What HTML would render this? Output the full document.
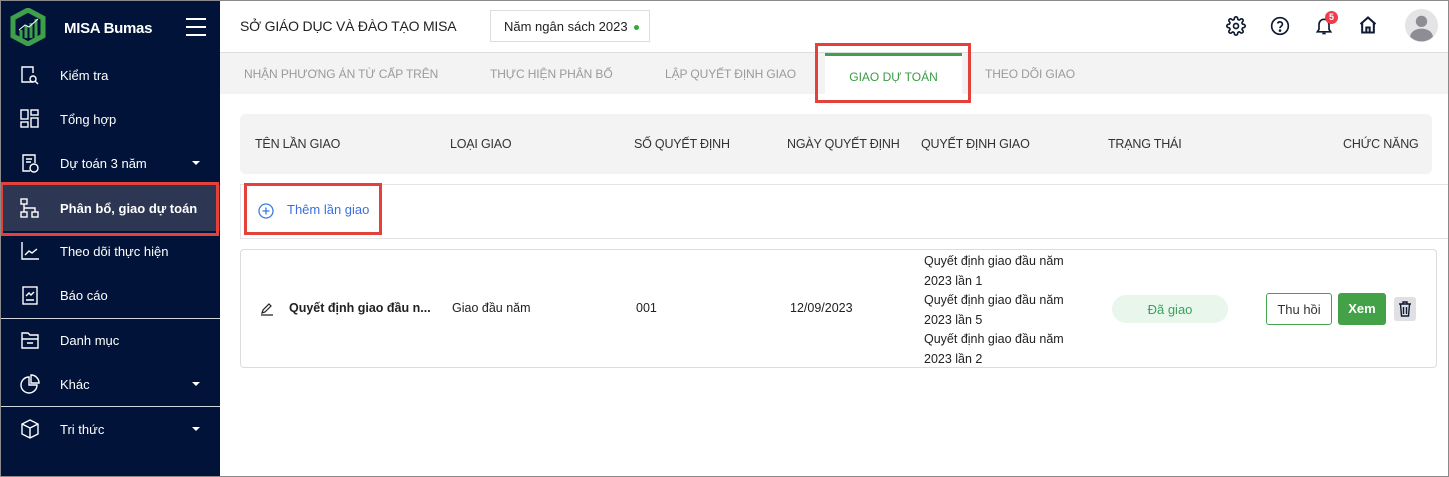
<!DOCTYPE html>
<html><head><meta charset="utf-8"><style>
*{box-sizing:border-box;margin:0;padding:0}
body{width:1449px;height:477px;overflow:hidden;font-family:"Liberation Sans",sans-serif;background:#fff;position:relative;color:#212121}
.frame{position:absolute;inset:0;border:1px solid #8a8a8a;pointer-events:none;z-index:10}
.sb{position:absolute;left:0;top:0;width:220px;height:477px;background:#011338;color:#fff}
.sb .logo{position:absolute;left:10px;top:8px}
.sb .brand{position:absolute;left:64px;top:20px;font-size:15px;font-weight:bold;letter-spacing:-0.3px}
.ham{position:absolute;left:186px;top:18px;width:20px}
.ham i{display:block;height:2px;background:#fff;margin-bottom:6px}
.it{position:absolute;left:0;width:220px;height:44px;font-size:13px;display:flex;align-items:center}
.it span{position:absolute;left:60px}
.it svg{position:absolute;left:20px}
.it .car{position:absolute;left:192px;width:0;height:0;border-left:4px solid transparent;border-right:4px solid transparent;border-top:4px solid #fff}
.act{background:#2d3652;font-weight:bold;border-left:3px solid #3ea04a}
.sep{position:absolute;left:0;width:220px;height:1px;background:#d0d4dc}
.red{position:absolute;border:3px solid #e5413b}
.hdr{position:absolute;left:220px;top:0;right:0;height:53px;border-bottom:1px solid #ddd}
.title{position:absolute;left:20px;top:18px;font-size:14px;color:#222;letter-spacing:-0.2px}
.year{position:absolute;left:270px;top:10px;width:160px;height:32px;border:1px solid #ddd;font-size:13px;padding:8px 0 0 13px}
.year b{position:absolute;right:10px;top:14px;width:5px;height:5px;border-radius:50%;background:#2eab3a}
.tabs{position:absolute;left:220px;top:53px;right:1px;height:41px;background:#f3f3f3}
.tab{position:absolute;top:14px;font-size:12px;color:#9a9a9a;letter-spacing:-0.1px}
.atab{position:absolute;left:605px;top:0;width:137px;height:41px;background:#fff;border-top:3px solid #3ea04a;color:#3a9a46;font-size:12px;text-align:center;padding-top:14px}
.th{position:absolute;left:240px;top:114px;width:1192px;height:60px;background:#f3f3f3;border-radius:6px;font-size:12.5px;color:#333;letter-spacing:-0.2px}
.th span{position:absolute;top:23px}
.line{position:absolute;left:220px;right:1px;height:1px;background:#e2e3e7}
.add{position:absolute;left:258px;top:202px;font-size:13px;color:#3b6fe0}
.card{position:absolute;left:240px;top:249px;width:1197px;height:119px;border:1px solid #dcdcdc;border-radius:4px;font-size:12.5px}
.card .c{position:absolute;top:51px}
.dec{position:absolute;left:683px;top:2px;line-height:19.5px;font-size:12.5px}
.pill{position:absolute;left:871px;top:45px;width:116px;height:28px;border-radius:14px;background:#e8f6ec;color:#3aa35a;text-align:center;padding-top:7px;font-size:13px}
.thu{position:absolute;left:1025px;top:43px;width:66px;height:32px;border:1px solid #45a24e;border-radius:3px;text-align:center;padding-top:8px;font-size:13px;color:#333}
.xem{position:absolute;left:1097px;top:43px;width:48px;height:32px;background:#43a147;border-radius:3px;color:#fff;font-weight:bold;text-align:center;padding-top:8px;font-size:13px}
.del{position:absolute;left:1153px;top:47px;width:22px;height:24px;background:#e0e0e4;border-radius:3px}
</style></head><body>
<div class="sb">
 <svg class="logo" width="36" height="38" viewBox="0 0 36 38"><path d="M18 2 L33 10 L33 28 L18 36 L3 28 L3 10 Z" fill="none" stroke="#3ea04a" stroke-width="5"/><path d="M11 30V22M16 30V18M21 30V15M26 30V11" stroke="#3ea04a" stroke-width="3"/><path d="M9 22 L15 17 L19 19 L28 11" stroke="#fff" stroke-width="1" fill="none"/></svg>
 <div class="brand">MISA Bumas</div>
 <div class="ham"><i></i><i></i><i></i></div>
 <div class="it" style="top:53px"><svg width="20" height="20" viewBox="0 0 20 20" fill="none" stroke="#fff" stroke-width="1.4"><path d="M13 17H2V2h11v6"/><circle cx="13" cy="14" r="3"/><path d="M15 16l3 3"/></svg><span>Kiểm tra</span></div>
 <div class="it" style="top:97px"><svg width="20" height="20" viewBox="0 0 20 20" fill="none" stroke="#fff" stroke-width="1.4"><rect x="1" y="1" width="7" height="9"/><rect x="1" y="13" width="7" height="5"/><rect x="11" y="1" width="7" height="5"/><rect x="11" y="9" width="7" height="9"/></svg><span>Tổng hợp</span></div>
 <div class="it" style="top:141px"><svg width="20" height="20" viewBox="0 0 20 20" fill="none" stroke="#fff" stroke-width="1.4"><path d="M10 18H3V2h12v8"/><path d="M6 6h6M6 9h5"/><circle cx="14" cy="15" r="4"/></svg><span>Dự toán 3 năm</span><i class="car"></i></div>
 <div class="it act" style="top:185px;height:46px"><svg width="20" height="20" viewBox="0 0 20 20" fill="none" stroke="#fff" stroke-width="1.4" style="left:17px"><rect x="1" y="1" width="6" height="5"/><rect x="1" y="14" width="6" height="5"/><rect x="12" y="14" width="6" height="5"/><path d="M4 6v8M4 10h11v4"/></svg><span style="left:57px">Phân bổ, giao dự toán</span></div>
 <div class="it" style="top:229px"><svg width="20" height="20" viewBox="0 0 20 20" fill="none" stroke="#fff" stroke-width="1.4"><path d="M2 1v17h17"/><path d="M5 14l4-4 3 2 5-4"/></svg><span>Theo dõi thực hiện</span></div>
 <div class="it" style="top:273px"><svg width="20" height="20" viewBox="0 0 20 20" fill="none" stroke="#fff" stroke-width="1.4"><rect x="3" y="2" width="14" height="17"/><path d="M6 11l3-3 2 2 3-3M6 15h8"/></svg><span>Báo cáo</span></div>
 <div class="sep" style="top:318px"></div>
 <div class="it" style="top:318px"><svg width="20" height="20" viewBox="0 0 20 20" fill="none" stroke="#fff" stroke-width="1.4"><path d="M2 3h6l2 2h8v13H2z"/><path d="M2 9h16M7 13h6"/></svg><span>Danh mục</span></div>
 <div class="it" style="top:362px"><svg width="20" height="20" viewBox="0 0 20 20" fill="none" stroke="#fff" stroke-width="1.4"><path d="M9 3a8 8 0 1 0 8 8H9z"/><path d="M11 1a8 8 0 0 1 8 8h-8z"/></svg><span>Khác</span><i class="car"></i></div>
 <div class="sep" style="top:406px"></div>
 <div class="it" style="top:407px"><svg width="20" height="20" viewBox="0 0 20 20" fill="none" stroke="#fff" stroke-width="1.4"><path d="M10 1l8 4v10l-8 4-8-4V5z"/><path d="M2 5l8 4 8-4M10 9v10"/></svg><span>Tri thức</span><i class="car"></i></div>
</div>
<div class="red" style="left:0;top:182px;width:219px;height:54px"></div>

<div class="hdr">
 <div class="title">SỞ GIÁO DỤC VÀ ĐÀO TẠO MISA</div>
 <div class="year">Năm ngân sách 2023<b></b></div>
 <svg style="position:absolute;left:1006px;top:16px" width="20" height="20" viewBox="0 0 24 24" fill="none" stroke="#0f1a33" stroke-width="2"><circle cx="12" cy="12" r="3"/><path d="M19.4 15a1.7 1.7 0 0 0 .3 1.8l.1.1a2 2 0 1 1-2.8 2.8l-.1-.1a1.7 1.7 0 0 0-2.9 1.2V21a2 2 0 1 1-4 0v-.1a1.7 1.7 0 0 0-2.9-1.2l-.1.1a2 2 0 1 1-2.8-2.8l.1-.1A1.7 1.7 0 0 0 3 14H3a2 2 0 1 1 0-4h.1a1.7 1.7 0 0 0 1.2-2.9l-.1-.1a2 2 0 1 1 2.8-2.8l.1.1A1.7 1.7 0 0 0 10 3V3a2 2 0 1 1 4 0v.1a1.7 1.7 0 0 0 2.9 1.2l.1-.1a2 2 0 1 1 2.8 2.8l-.1.1A1.7 1.7 0 0 0 21 10h0a2 2 0 1 1 0 4h-.1a1.7 1.7 0 0 0-1.5 1z"/></svg>
 <svg style="position:absolute;left:1050px;top:16px" width="20" height="20" viewBox="0 0 24 24" fill="none" stroke="#0f1a33" stroke-width="2"><circle cx="12" cy="12" r="10"/><path d="M9.1 9a3 3 0 0 1 5.8 1c0 2-3 2.5-3 4.5"/><circle cx="12" cy="17.5" r=".6" fill="#0f1a33"/></svg>
 <svg style="position:absolute;left:1094px;top:15px" width="20" height="22" viewBox="0 0 24 24" fill="none" stroke="#0f1a33" stroke-width="2"><path d="M18 16V10a6 6 0 0 0-12 0v6l-2 3h16z"/><path d="M10 21h4"/></svg>
 <div style="position:absolute;left:1105px;top:11px;width:13px;height:13px;border-radius:50%;background:#f03c4a;color:#fff;font-size:9px;font-weight:bold;text-align:center;line-height:13px">5</div>
 <svg style="position:absolute;left:1138px;top:15px" width="20" height="20" viewBox="0 0 24 24" fill="none" stroke="#0f1a33" stroke-width="2.4"><path d="M3 11l9-8 9 8M5 9v12h14V9"/><path d="M10 21v-6h4v6"/></svg>
 <svg style="position:absolute;left:1185px;top:9px" width="33" height="33" viewBox="0 0 32 32"><circle cx="16" cy="16" r="16" fill="#e4e4e7"/><circle cx="16" cy="12" r="5.5" fill="#8d8d93"/><path d="M5 27a11 8 0 0 1 22 0a16 16 0 0 1-22 0z" fill="#8d8d93"/></svg>
</div>
<div class="tabs">
 <div class="tab" style="left:24px">NHẬN PHƯƠNG ÁN TỪ CẤP TRÊN</div>
 <div class="tab" style="left:270px">THỰC HIỆN PHÂN BỔ</div>
 <div class="tab" style="left:445px">LẬP QUYẾT ĐỊNH GIAO</div>
 <div class="atab">GIAO DỰ TOÁN</div>
 <div class="tab" style="left:765px">THEO DÕI GIAO</div>
</div>
<div class="red" style="left:815px;top:43px;width:156px;height:60px"></div>

<div class="th">
 <span style="left:15px">TÊN LẦN GIAO</span><span style="left:210px">LOẠI GIAO</span><span style="left:394px">SỐ QUYẾT ĐỊNH</span><span style="left:547px">NGÀY QUYẾT ĐỊNH</span><span style="left:681px">QUYẾT ĐỊNH GIAO</span><span style="left:868px">TRẠNG THÁI</span><span style="left:1103px">CHỨC NĂNG</span>
</div>
<div class="line" style="top:184px;left:240px"></div>
<div class="line" style="top:238px;left:240px"></div>
<div style="position:absolute;left:240px;top:184px;width:1px;height:55px;background:#e2e3e7"></div>
<svg style="position:absolute;left:258px;top:203px" width="16" height="16" viewBox="0 0 16 16" fill="none" stroke="#3a7de0" stroke-width="1.3"><circle cx="8" cy="8" r="7"/><path d="M8 4.5v7M4.5 8h7"/></svg>
<div class="add" style="left:287px">Thêm lần giao</div>
<div class="red" style="left:244px;top:183px;width:138px;height:52px"></div>

<div class="card">
 <svg style="position:absolute;left:19px;top:52px" width="14" height="14" viewBox="0 0 14 14" fill="none" stroke="#222" stroke-width="1.2"><path d="M2 11l1-3 6-6 2 2-6 6zM1 13h12"/></svg>
 <div class="c" style="left:48px;font-weight:bold">Quyết định giao đầu n...</div>
 <div class="c" style="left:211px">Giao đầu năm</div>
 <div class="c" style="left:395px">001</div>
 <div class="c" style="left:549px">12/09/2023</div>
 <div class="dec">Quyết định giao đầu năm<br>2023 lần 1<br>Quyết định giao đầu năm<br>2023 lần 5<br>Quyết định giao đầu năm<br>2023 lần 2</div>
 <div class="pill">Đã giao</div>
 <div class="thu">Thu hồi</div>
 <div class="xem">Xem</div>
 <div class="del"><svg style="position:absolute;left:4px;top:4px" width="14" height="16" viewBox="0 0 14 16" fill="none" stroke="#0f1a33" stroke-width="1.4"><path d="M1 3h12M5 3V1h4v2M2.5 3l1 12h7l1-12M5.5 6v7M8.5 6v7"/></svg></div>
</div>
<div class="frame"></div>
</body></html>
